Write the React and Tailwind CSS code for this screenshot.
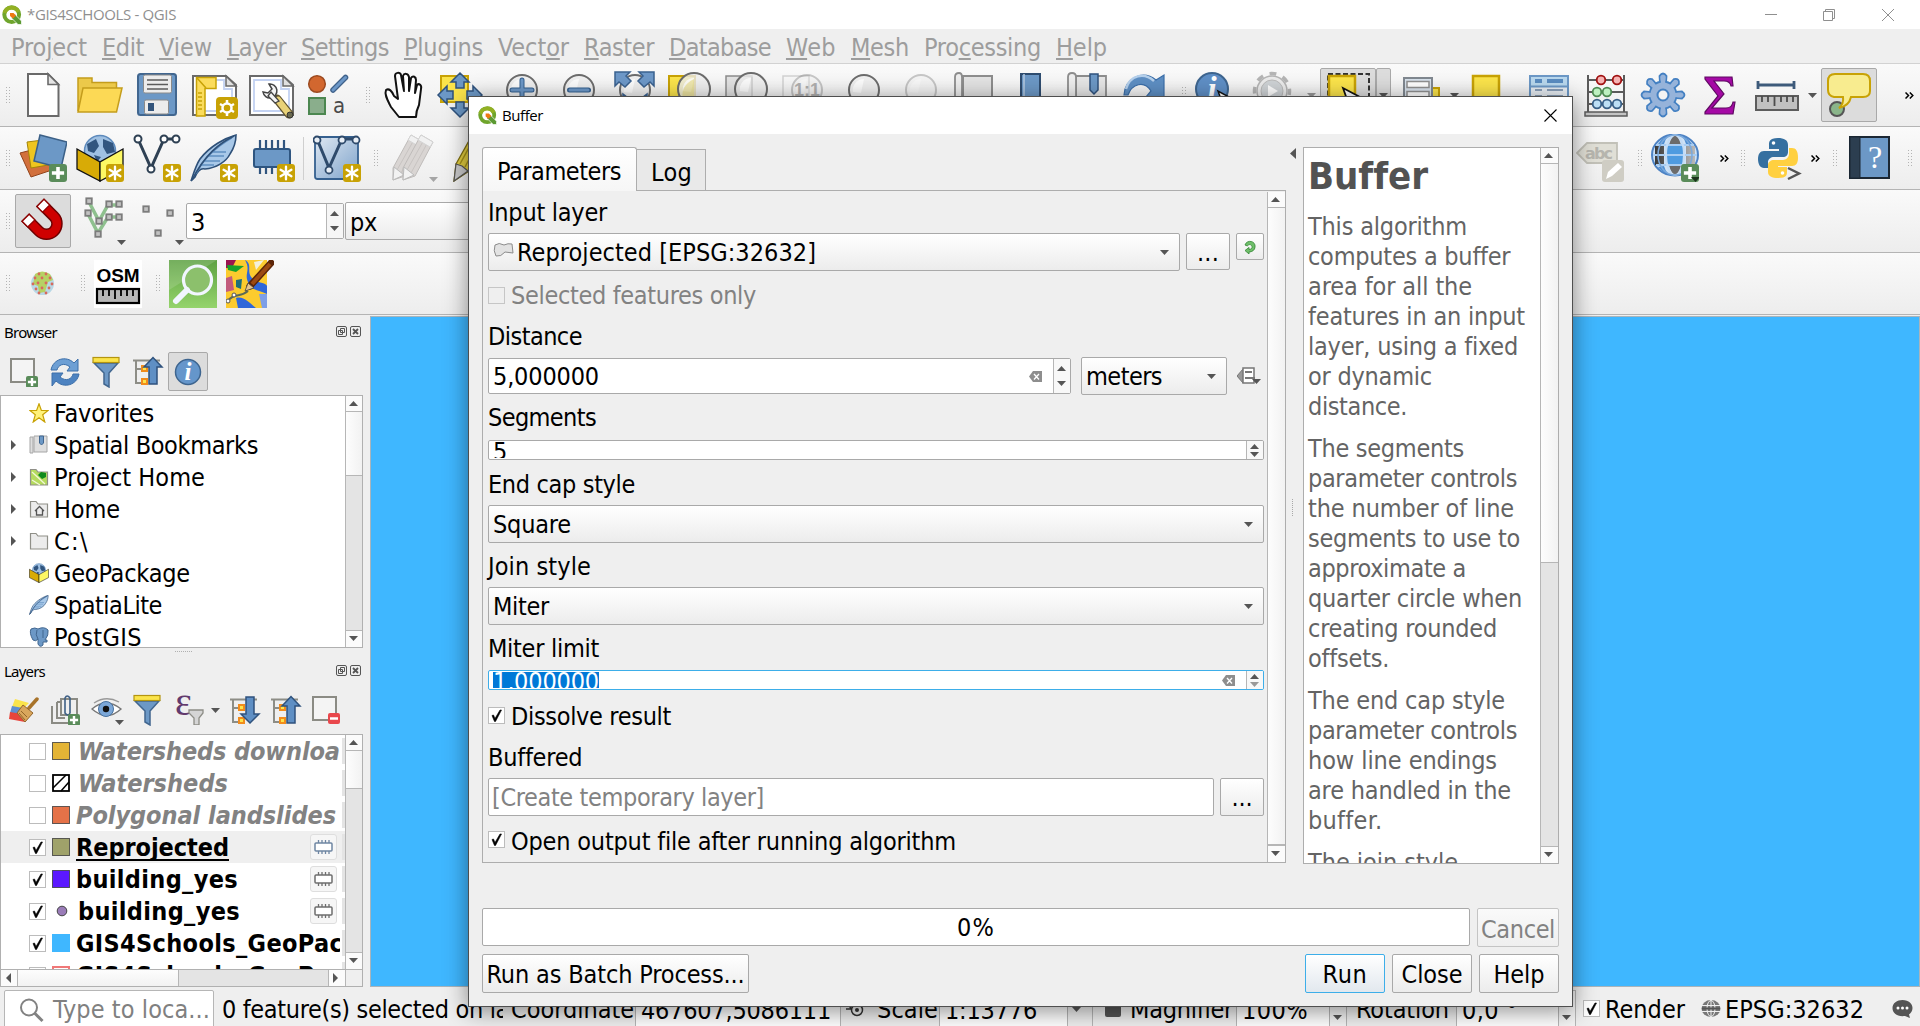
import React, { useLayoutEffect, useRef, useState } from "react";

/* ---------- text ---------- */

// A label whose letters are spaced so that the whole label has the width w.
function T({ w, className = "", children }) {
  const ref = useRef(null);
  const [ls, setLs] = useState(0);
  useLayoutEffect(() => {
    const el = ref.current;
    if (!w) return;
    const natural = el.getBoundingClientRect().width;
    setLs((w - natural) / el.textContent.length);
  }, [w]);
  return (
    <span ref={ref} className={"inline-block whitespace-pre " + className} style={{ letterSpacing: ls }}>
      {children}
    </span>
  );
}

/* ---------- small shared parts ---------- */

const Svg = ({ s = 48, w, h, vb, children, className = "" }) => (
  <svg width={w || s} height={h || s} viewBox={vb || `0 0 ${w || s} ${h || s}`} className={"block shrink-0 " + className} fill="none">
    {children}
  </svg>
);

const Down = ({ c = "#555", className = "" }) => (
  <Svg w={9} h={5} className={className}><path d="M0 0H9L4.5 5Z" fill={c} /></Svg>
);
const Up = ({ c = "#555", className = "" }) => (
  <Svg w={9} h={5} className={className}><path d="M0 5H9L4.5 0Z" fill={c} /></Svg>
);

function Grip({ className = "" }) {
  return (
    <Svg w={5} h={17} className={className}>
      {[0, 3, 6, 9, 12, 15].map((y) => (
        <g key={y} fill="#b4b4b4"><rect x="0" y={y} width="1" height="1" /><rect x="3" y={y} width="1" height="1" /></g>
      ))}
    </Svg>
  );
}
const GripCell = ({ w = "w-[18px]", pad = "pl-[10px]" }) => <div className={"flex shrink-0 items-center " + w + " " + pad}><Grip /></div>;
const Slot = ({ children }) => <div className="w-[57px] shrink-0 pl-[5px]">{children}</div>;

const Star = ({ x, y, s = 18 }) => {
  const c = s / 2;
  return (
    <g transform={`translate(${x} ${y})`}>
      <rect width={s} height={s} rx={s / 6} fill="#c8a205" />
      <path
        d={`M${c} ${s * 0.15}V${s * 0.85}M${s * 0.2} ${s * 0.32}L${s * 0.8} ${s * 0.68}M${s * 0.8} ${s * 0.32}L${s * 0.2} ${s * 0.68}`}
        stroke="#fff" strokeWidth={s * 0.13} strokeLinecap="round"
      />
    </g>
  );
};
const Plus = ({ x, y, s = 18 }) => (
  <g transform={`translate(${x} ${y})`}>
    <rect width={s} height={s} rx={s / 6} fill="#5a8c5a" />
    <path d={`M${s / 2} ${s * 0.16}V${s * 0.84}M${s * 0.16} ${s / 2}H${s * 0.84}`} stroke="#fff" strokeWidth={s * 0.2} />
  </g>
);

const QLogo = ({ s = 20 }) => (
  <Svg w={s} h={s} vb="0 0 20 20">
    <circle cx="9.7" cy="9.6" r="7.4" stroke="#6fa52c" strokeWidth="4" />
    <path d="M2.5 8A7.5 7.5 0 0 1 16.500 7" stroke="#93b023" strokeWidth="4" />
    <path d="M9.500 9.500L13 9.500L19.500 16V19.500H16L9.500 13Z" fill="#5c9a33" stroke="#fff" strokeWidth=".7" />
    <path d="M8 8H11.500L14 10.500L11 13.500L8 11Z" fill="#ee7913" />
  </Svg>
);

/* ---------- toolbar icons, 48px ---------- */

const Lens = ({ cx = 29, cy = 19, r = 15, faint }) => (
  <g opacity={faint ? 0.35 : 1}>
    <circle cx={cx} cy={cy} r={r} fill="#eeeeee" fillOpacity=".8" stroke="#6c6c6c" strokeWidth="2" />
    <path d={`M${cx - 11} ${cy + 2}A11 11 0 0 1 ${cx} ${cy - 11}L${cx - 3} ${cy + 3}Z`} fill="#fff" fillOpacity=".8" />
  </g>
);

const IcNew = () => (
  <Svg><path d="M9 3H29L39.500 13.500V45H9Z" fill="#fff" stroke="#6a6a6a" strokeWidth="2" /><path d="M29 3V13.500H39.500Z" fill="#e4e4e4" stroke="#6a6a6a" strokeWidth="1.6" /></Svg>
);
const IcOpen = () => (
  <Svg>
    <path d="M2 7H16V11.500H40.500V18H8L2 40Z" fill="#ecc94a" stroke="#c49d1c" strokeWidth="1.5" />
    <path d="M7 17H46L40.500 41H2Z" fill="#fcd955" stroke="#c49d1c" strokeWidth="1.5" />
  </Svg>
);
const IcSave = () => (
  <Svg>
    <rect x="5" y="3" width="38" height="41" rx="2.500" fill="#6c98c6" stroke="#41668f" strokeWidth="2" />
    <rect x="10.500" y="4" width="28" height="18" rx="1.500" fill="#ececec" stroke="#8a8a8a" />
    <path d="M14 9H35M14 13.500H35M14 18H35" stroke="#5b5b5b" strokeWidth="1.6" />
    <rect x="11.500" y="29" width="24" height="14" rx="1.500" fill="#ececec" stroke="#8a8a8a" />
    <rect x="15" y="32" width="6" height="8" fill="#33547b" />
  </Svg>
);
const Page = () => (
  <>
    <path d="M3 5H36L46 14V44H3Z" fill="#fff" stroke="#6a6a6a" strokeWidth="2" />
    <path d="M7 9H34V18H42V40H7Z" stroke="#c3d2f2" strokeWidth="1.800" />
    <path d="M36 5V15H46Z" fill="#e0e0e0" stroke="#6a6a6a" strokeWidth="1.500" />
  </>
);
const IcLayoutNew = () => (
  <Svg>
    <Page />
    <path d="M6.500 6.500H26V17.500H15V45H6.500Z" fill="#fbdc5c" stroke="#c8a205" strokeWidth="1.500" />
    <path d="M7 7L16 17M8 22H12M8 26H12M8 30H12M8 34H12M8 38H12" stroke="#c8a205" strokeWidth="1.500" />
    <rect x="26" y="26" width="22" height="22" rx="4" fill="#c8a205" />
    <circle cx="37" cy="37" r="4.500" stroke="#fff" strokeWidth="2.500" />
    <path d="M37 29V33M37 41V45M30 33L33.500 35M40.500 39L44 41M44 33L40.500 35M33.500 39L30 41" stroke="#fff" strokeWidth="2.500" />
  </Svg>
);
const IcLayoutMgr = () => (
  <Svg>
    <Page />
    <path d="M30 28L42 43" stroke="#5f5330" strokeWidth="9" strokeLinecap="round" />
    <path d="M31 29L42 43" stroke="#e9d278" strokeWidth="6.500" strokeLinecap="round" />
    <circle cx="43" cy="44" r="3" fill="#6a6a50" stroke="#333" />
    <path d="M22 13A7 7 0 1 1 16 21L21 22L25 18Z" fill="#f4f4f4" stroke="#444" strokeWidth="1.500" />
    <path d="M24 21L32 30L28 32L21 25Z" fill="#f4f4f4" stroke="#444" strokeWidth="1.300" />
  </Svg>
);
const IcStyle = () => (
  <Svg>
    <circle cx="13" cy="13" r="8.300" fill="#d2672f" stroke="#9c4a20" strokeWidth="1.500" />
    <path d="M29 19L41.500 6.500" stroke="#3f618a" strokeWidth="5.500" strokeLinecap="round" />
    <path d="M29 19L41.500 6.500" stroke="#6d98c8" strokeWidth="3" strokeLinecap="round" />
    <rect x="5" y="27" width="16" height="16" fill="#8aae8c" stroke="#4c8750" strokeWidth="2" />
    <text x="29" y="42" fontSize="22" fill="#4a4a4a" fontFamily="DejaVu Sans Condensed">a</text>
  </Svg>
);
const IcHand = () => (
  <Svg>
    <path
      d="M20 46L12 36C9 30 5 24 7 19C10 17 13 20 15 25L19 28L16 5C16 1 21 1 22 4L25 20L24 5C25 2 29 2 30 6L30 20L32 7C34 4 37 6 37 9L36 22L38 14C40 12 43 14 42 18L40 34C38 38 37 40 37 46Z"
      fill="#fff" stroke="#111" strokeWidth="2" strokeLinejoin="round"
    />
  </Svg>
);
const IcPan = () => (
  <Svg>
    <rect x="5" y="5" width="27" height="26" fill="#fbe44b" stroke="#c8a205" strokeWidth="2" />
    <path d="M24 2L33 11H28V17H20V11H15ZM24 46L33 37H28V31H20V37H15ZM2 24L11 15V20H17V28H11V33ZM46 24L37 15V20H31V28H37V33Z" fill="#6c98c6" stroke="#2f527d" strokeWidth="1.500" />
  </Svg>
);
const IcZoomIn = () => <Svg><Lens /><path d="M29 9V28M19 19H39" stroke="#35608f" strokeWidth="5" strokeLinecap="round" /><path d="M29 9V28M19 19H39" stroke="#6d98c8" strokeWidth="3" strokeLinecap="round" /></Svg>;
const IcZoomOut = () => <Svg><Lens /><path d="M19.500 19H38.500" stroke="#35608f" strokeWidth="5" strokeLinecap="round" /><path d="M20 19H38" stroke="#6d98c8" strokeWidth="3" strokeLinecap="round" /></Svg>;
const IcZoomFull = () => (
  <Svg>
    <Lens cx={28} />
    <path d="M8 1H23L19 5L24 10L18 16L12 11L8 15ZM47 1H32L36 5L31 10L37 16L43 11L47 15ZM36 26L40 23V28ZM20 26L16 23V28Z" fill="#6d98c8" stroke="#3a618f" strokeWidth="1.500" />
  </Svg>
);
const IcZoomSel = () => <Svg><rect x="5" y="5" width="26" height="26" fill="#fbe44b" stroke="#c8a205" strokeWidth="2" /><Lens cx={30} cy={18} r={16} /><path d="M30 8V28H19Q16 15 30 8" fill="#e8dc80" fillOpacity=".6" /></Svg>;
const IcZoomLayer = () => <Svg><rect x="5" y="5" width="26" height="26" fill="#e2e2e2" stroke="#8c8c8c" strokeWidth="1.500" /><Lens cx={30} cy={18} r={16} /><path d="M31 6V28" stroke="#ccc" /></Svg>;
const IcZoomNative = () => (
  <Svg>
    <rect x="5" y="5" width="26" height="26" stroke="#d2d2d2" strokeWidth="1.500" />
    <Lens faint />
    <text x="29" y="25" textAnchor="middle" fontSize="18" fontWeight="bold" fill="#b0b0b0" fontFamily="Liberation Sans">1:1</text>
  </Svg>
);
const IcLens = ({ faint }) => <Svg><Lens faint={faint} /></Svg>;
const IcMapNew = () => <Svg><path d="M14 5H43V40H14Z" fill="#e3e3e3" stroke="#8d8d8d" strokeWidth="2" /><path d="M6 40V6Q6 2 10 2Q13 2 13 6V40" fill="#eee" stroke="#8d8d8d" strokeWidth="1.800" /></Svg>;
const IcBook = () => <Svg><path d="M15 3H34V44H15Z" fill="#6c98c6" stroke="#2f4d70" strokeWidth="2" /><path d="M18 3V44" stroke="#b7cce3" strokeWidth="1.500" /></Svg>;
const IcBookmarks = () => (
  <Svg>
    <path d="M13 5H43V40H13Z" fill="#e6e6e6" stroke="#8d8d8d" strokeWidth="1.800" />
    <path d="M5 40V6Q5 2 9 2Q13 2 13 6V40" fill="#eee" stroke="#8d8d8d" strokeWidth="1.800" />
    <path d="M27 3H35V19L31 23L27 19Z" fill="#6c98c6" stroke="#2f527d" strokeWidth="1.500" />
  </Svg>
);
const IcRefresh = () => (
  <Svg>
    <path d="M4 24C5 8 22 -2 36 9L44 4V26H26L31 20C24 9 12 13 8 24Z" fill="#5e8fc4" stroke="#3c6fa9" strokeWidth="1.200" />
    <path d="M6 18C10 4 24 1 34 10" stroke="#b5d0ec" strokeWidth="2.500" />
  </Svg>
);
const IcInfo = () => (
  <Svg>
    <circle cx="17" cy="18" r="16" fill="#5f8fc6" stroke="#3e658f" strokeWidth="2" />
    <text x="17" y="29" textAnchor="middle" fontSize="33" fontStyle="italic" fontWeight="bold" fill="#fff" fontFamily="Liberation Serif">i</text>
    <path d="M23 20L28 34L33 29L36 27Z" fill="#fff" stroke="#111" strokeWidth="1.500" />
  </Svg>
);
const IcGearFaint = () => (
  <Svg>
    <circle cx="20" cy="20" r="17.500" stroke="#b5b5b5" strokeWidth="3.500" strokeDasharray="6.900 6.840" strokeDashoffset="3" />
    <circle cx="20" cy="20" r="15" fill="#ececec" stroke="#b5b5b5" strokeWidth="1.500" />
    <circle cx="20" cy="20" r="11" fill="#cfd3d6" stroke="#bbb" />
    <path d="M16 14L26 20L16 26Z" fill="#fff" />
  </Svg>
);
const IcSelect = () => (
  <Svg>
    <rect x="3" y="3" width="41" height="41" stroke="#333" strokeWidth="2" strokeDasharray="5 2.500" />
    <rect x="4" y="5" width="26" height="28" fill="#fbe44b" stroke="#c8a205" strokeWidth="2.500" />
    <path d="M18 17L24 34L28 28L35 26Z" fill="#fff" stroke="#111" strokeWidth="1.800" />
  </Svg>
);
const IcForm = () => (
  <Svg>
    <rect x="25" y="17" width="18" height="18" fill="#fbe44b" stroke="#c8a205" strokeWidth="2" />
    <rect x="8" y="7" width="28" height="35" fill="#d8e2ec" stroke="#808890" strokeWidth="2" />
    <path d="M11 10.500H33V16.500H11ZM11 20.500H33V27H11Z" fill="#fff" stroke="#909090" strokeWidth="1.500" />
  </Svg>
);
const IcYellow = () => <Svg><rect x="5" y="5" width="26" height="28" fill="#fbe44b" stroke="#c8a205" strokeWidth="2.500" /></Svg>;
const IcTable = () => (
  <Svg>
    <rect x="5" y="5" width="38" height="38" fill="#e8eef4" stroke="#6c98c6" strokeWidth="2" />
    <rect x="6" y="6" width="36" height="9" fill="#b9d8ee" />
    <path d="M5 15.500H43" stroke="#6c98c6" strokeWidth="2" />
    <path d="M10 10H17M22 10H38" stroke="#5a8cc0" strokeWidth="4" />
    <path d="M10 19H17M22 19H38M10 25H17M22 25H38" stroke="#8a9fb8" strokeWidth="2" />
  </Svg>
);
const IcAbacus = () => (
  <Svg>
    <path d="M6 4V41M42 4V41M6 9H42M6 21H42M6 33H42" stroke="#5b5b5b" strokeWidth="2" />
    <rect x="3" y="41" width="42" height="4" fill="#c4c4c4" stroke="#5b5b5b" strokeWidth="1.500" />
    {[[19, 9, "#f6b3b3", "#a01010"], [35, 9, "#f6b3b3", "#a01010"], [15, 21, "#bdf0c0", "#4e8a52"], [25, 21, "#bdf0c0", "#4e8a52"], [15, 33, "#bddff5", "#385f86"], [25, 33, "#bddff5", "#385f86"], [35, 33, "#bddff5", "#385f86"]].map((b, i) => (
      <circle key={i} cx={b[0]} cy={b[1]} r="4.300" fill={b[2]} stroke={b[3]} strokeWidth="1.800" />
    ))}
  </Svg>
);
const IcGear = () => (
  <Svg>
    {[0, 45, 90, 135, 180, 225, 270, 315].map((a) => (
      <path key={a} transform={`rotate(${a} 24 24)`} d="M21 12L20.500 5Q24 0 27.500 5L27 12Z" fill="#96b3da" stroke="#4480c2" strokeWidth="1.800" />
    ))}
    <circle cx="24" cy="24" r="13.500" fill="#96b3da" stroke="#4480c2" strokeWidth="1.800" />
    {[0, 45, 90, 135, 180, 225, 270, 315].map((a) => (
      <path key={a} transform={`rotate(${a} 24 24)`} d="M22 13L21.500 6Q24 2 26.500 6L26 13Z" fill="#96b3da" />
    ))}
    <circle cx="24" cy="24" r="5.500" fill="#f3f3f3" stroke="#4480c2" strokeWidth="2" />
  </Svg>
);
const IcSigma = () => (
  <Svg><path d="M9 6H36L37 15H35Q34 10 28 10H18L28 23L16 37H30Q36 37 37 31H39L37 43H9V41L22 25L9 8Z" fill="#a509a5" stroke="#5f0a62" strokeWidth="1.200" /></Svg>
);
const IcMeasure = () => (
  <Svg>
    <path d="M5 14H41M5 10V18M41 10V18" stroke="#3d5a7a" strokeWidth="2.800" />
    <rect x="3" y="25" width="42" height="14" fill="#c0c0c0" stroke="#5c5c5c" strokeWidth="2" />
    <path d="M9 25V31M15 25V31M21.500 25V35M28 25V31M34 25V31M40 25V31" stroke="#4c4c4c" strokeWidth="1.800" />
  </Svg>
);
const IcTips = () => (
  <Svg>
    <circle cx="12" cy="38" r="7" fill="#8ab58a" stroke="#555" strokeWidth="2" />
    <path d="M10 3H38Q45 3 45 10V20Q45 26 38 26H26Q24 35 14 37Q19 33 18 26H9Q3 25 3 19V10Q3 3 10 3Z" fill="#f8ec8f" stroke="#c8a205" strokeWidth="2" />
  </Svg>
);

const IcSource = () => (
  <Svg>
    <path d="M1 19L24 13L33 36L12 43Z" fill="#d2703c" stroke="#93441c" />
    <path d="M8 8L32 5L35 30L12 34Z" fill="#eec51f" stroke="#a28408" />
    <path d="M21 1L48 8L42 34L15 27Z" fill="#6c98c6" stroke="#3b6087" strokeWidth="1.500" />
    <Plus x={30} y={30} />
  </Svg>
);
const Box = () => (
  <>
    <circle cx="24" cy="17" r="15.500" fill="#9fc0e2" stroke="#5d8abc" strokeWidth="1.500" />
    <path d="M11 10L20 5L23 12L18 19L12 17ZM27 5L37 9L39 18L31 20L27 13ZM18 21L25 23L21 28Z" fill="#31557f" />
    <path d="M1 15L24 28V47L1 35Z" fill="#d8ab06" stroke="#111" strokeWidth="1.300" />
    <path d="M47 15L24 28V47L47 35Z" fill="#fdf864" stroke="#111" strokeWidth="1.300" />
  </>
);
const IcGpkg = () => <Svg><Box /><Star x={30} y={30} /></Svg>;
const VNodes = ({ c = "#2e4053" }) => (
  <>
    <path d="M5 5L18 34L31 5H44" stroke={c} strokeWidth="3" />
    {[[5, 5], [18, 35], [31, 5], [43, 5]].map((p, i) => <circle key={i} cx={p[0]} cy={p[1]} r="3.500" fill="#fff" stroke={c} strokeWidth="2" />)}
  </>
);
const IcShape = () => <Svg><VNodes /><Star x={30} y={30} /></Svg>;
const FeatherShape = () => (
  <>
    <path d="M46 1C35 4 20 12 10 25C6 31 4 38 1 47L5 43C8 36 12 34 15 35C26 34 36 28 40 20C44 14 46 8 46 1Z" fill="#a8c8e8" stroke="#2e5078" strokeWidth="1.600" />
    <path d="M42 4C28 12 14 24 6 40M22 18H36M18 22H34M14 27H30M10 31H24" stroke="#5f8ec0" strokeWidth="1.400" />
    <path d="M44 2C30 9 15 20 2 46" stroke="#2e5078" strokeWidth="1.600" />
  </>
);
const IcFeather = () => <Svg><FeatherShape /><Star x={30} y={30} /></Svg>;
const IcMemory = () => (
  <Svg>
    <path d="M13 6V14M19 6V14M25 6V14M31 6V14M37 6V14M13 33V40M19 33V40M25 33V40M31 33V40" stroke="#31557f" strokeWidth="2.200" />
    <rect x="7" y="15" width="36" height="18" rx="2" fill="#6c98c6" stroke="#2e5580" strokeWidth="2" />
    <Star x={30} y={30} />
  </Svg>
);
const IcVirtual = () => (
  <Svg>
    <defs><linearGradient id="vg" x1="0" y1="0" x2="1" y2="1"><stop offset="0" stopColor="#dfe8f2" /><stop offset="1" stopColor="#7ea3cb" /></linearGradient></defs>
    <rect x="2" y="3" width="43" height="42" rx="2.500" fill="url(#vg)" stroke="#35608f" strokeWidth="1.800" />
    <path d="M4 5L16 34L29 5H44" stroke="#2e4a6b" strokeWidth="3" />
    {[[4, 6], [16, 36], [29, 6], [43, 6]].map((p, i) => <circle key={i} cx={p[0]} cy={p[1]} r="3.500" fill="#e8eef5" stroke="#2e4a6b" strokeWidth="1.800" />)}
    <Star x={30} y={30} />
  </Svg>
);
const IcPencils = () => (
  <Svg>
    {[0, 10].map((d) => (
      <g key={d} transform={`translate(${d} 0)`}>
        <path d="M4 34L22 1L34 8L16 42L4 46Z" fill="#d9d5d3" stroke="#bfbcba" />
        <path d="M8 36L26 4M12 39L30 6" stroke="#c8c4c2" />
        <path d="M5 33L4 46L15 41L10 37Z" fill="#f2f2f2" stroke="#bbb" />
        <path d="M22 1L34 8L31 13L19 6Z" fill="#f1f1f1" stroke="#d4d4d4" />
      </g>
    ))}
  </Svg>
);
const IcPencil = () => (
  <Svg>
    <path d="M7 30L26 -4L36 2L20 37L5 47Z" fill="#e0cc3f" stroke="#7d6d10" strokeWidth="1.300" />
    <path d="M11 30L28 -1M16 33L33 1" stroke="#a59119" strokeWidth="1.500" />
    <path d="M7 30L5 47L19 37L13 32Z" fill="#c9c9c9" stroke="#555" strokeWidth="1.200" />
  </Svg>
);
const IcAbc = () => (
  <Svg>
    <path d="M1 19L11 9H41V29H11Z" fill="#e0dfd6" stroke="#c2c1b8" strokeWidth="1.800" />
    <text x="9" y="25" fontSize="16" fontWeight="bold" fill="#b6b5ae" textLength="28" fontFamily="DejaVu Sans">abc</text>
    <rect x="26" y="26" width="22" height="22" rx="3" fill="#cfcdc4" />
    <path d="M42 29L46 33L36 42L30 45L32 38Z" fill="#fff" />
  </Svg>
);
const IcWeb = () => (
  <Svg>
    <defs><linearGradient id="wg" x1="0" x2="1" y1="0" y2="0"><stop offset="0" stopColor="#3a3a3a" /><stop offset="1" stopColor="#b9b9b9" /></linearGradient></defs>
    <ellipse cx="24" cy="21" rx="23" ry="20.500" fill="#cfe2f6" stroke="#4e83c4" strokeWidth="2" />
    <path d="M16 12H32V31H16Z" fill="#4f9be0" /><path d="M4 12H13V31H4ZM35 12H44V31H35Z" fill="url(#wg)" />
    <path d="M18 11Q20 3 24 1.500Q28 3 30 11ZM18 31Q20 39 24 41Q28 39 30 31Z" fill="#6b6b6b" />
    <path d="M7 10Q11 4 17 2Q14 6 13 10ZM41 10Q37 4 31 2Q34 6 35 10ZM7 33Q11 38 17 40Q14 36 13 32Z" fill="#4f8fd2" />
    <path d="M2 21H46M5 11H43M5 31H43" stroke="#a9cdf2" strokeWidth="2" />
    <ellipse cx="24" cy="21" rx="9" ry="20" stroke="#c4dcf5" strokeWidth="2" /><ellipse cx="24" cy="21" rx="17" ry="20" stroke="#7ba9dc" strokeWidth="1.500" />
    <Plus x={30} y={30} /><path d="M40 43H49L44.500 48Z" fill="#1c331c" />
  </Svg>
);
const IcPython = () => (
  <Svg>
    <path d="M24 4C15 4 15 8 15 11V15H25V17H10C6 17 4 20 4 25C4 30 6 34 10 34H14V28C14 25 17 23 20 23H29C32 23 34 21 34 18V11C34 6 30 4 24 4Z" fill="#3670a0" />
    <path d="M24 44C33 44 33 41 33 37V33H24V32H38C42 32 44 29 44 24C44 17 42 14 38 14H35V20C35 23 32 26 29 26H20C17 26 14 28 14 31V38C14 42 18 44 24 44Z" fill="#ffd040" />
    <circle cx="19.500" cy="9" r="1.800" fill="#fff" /><circle cx="28.500" cy="39" r="1.800" fill="#fff" />
    <path d="M34 34L45 39.500L34 45" stroke="#555" strokeWidth="2.500" />
  </Svg>
);
const IcHelp = () => (
  <Svg>
    <rect x="4" y="3" width="39" height="41" fill="#6c98c6" stroke="#1b2733" strokeWidth="2" />
    <rect x="4" y="3" width="10" height="41" fill="#2c3e50" stroke="#1b2733" />
    <text x="29" y="34" textAnchor="middle" fontSize="32" fill="#fff" fontFamily="Liberation Serif">?</text>
  </Svg>
);
const IcMagnet = () => (
  <Svg>
    <g transform="translate(1 1) rotate(-45 24 24)">
      <path d="M9 8V27A15.500 15.500 0 0 0 40 27V8H30V27A5.500 5.500 0 0 1 19 27V8Z" fill="#cf0000" stroke="#6e0000" strokeWidth="1.500" />
      <path d="M9 8H19V16H9ZM30 8H40V16H30Z" fill="#fff" stroke="#8e0000" strokeWidth="1.300" />
    </g>
  </Svg>
);
const Node = ({ x, y }) => <rect x={x - 2.700} y={y - 2.700} width="5.500" height="5.500" fill="#c2c2c2" stroke="#7c7c7c" strokeWidth="1.800" />;
const IcSnapV = () => (
  <Svg>
    <path d="M9 5L19 24L28 8H39M8 17L18 36L28 20H39" stroke="#8ec08e" strokeWidth="3.500" />
    {[[9, 4], [29, 7], [39, 7], [8, 16], [19, 24], [29, 20], [39, 20], [18, 37]].map((p, i) => <Node key={i} x={p[0]} y={p[1]} />)}
    <path d="M37 43H46L41.500 48Z" fill="#555" />
  </Svg>
);
const IcSnapP = () => (
  <Svg><Node x={9} y={12} /><Node x={33} y={16} /><Node x={21} y={36} /><path d="M38 43H47L42.500 48Z" fill="#555" /></Svg>
);
const IcBall = () => (
  <Svg>
    <circle cx="24.500" cy="23.500" r="11.500" fill="#b8d8e6" />
    <path d="M17 14Q24 9 32 14L35 20L30 22L27 32L21 33L20 26L15 24Z" fill="#b6d264" />
    {[[21, 14], [28, 14], [17, 18], [24, 18], [32, 18], [15, 24], [20, 23], [28, 23], [34, 24], [18, 29], [24, 28], [31, 28], [21, 33], [28, 33]].map((p, i) => <circle key={i} cx={p[0]} cy={p[1]} r="1.400" fill="#d8695c" />)}
  </Svg>
);
const IcOsm = () => (
  <Svg className="bg-white">
    <text x="2.500" y="22" fontSize="19" fontWeight="bold" fill="#000" textLength="43" fontFamily="Liberation Sans">OSM</text>
    <rect x="3" y="29" width="42" height="14" fill="#b8b8b8" stroke="#000" strokeWidth="2.200" />
    <path d="M9 29V36M15 29V36M21 29V39M27 29V36M33 29V36M39 29V36" stroke="#000" strokeWidth="1.800" />
  </Svg>
);
const IcGreen = () => (
  <Svg>
    <defs><linearGradient id="gg" x1="0" y1="0" x2="0" y2="1"><stop offset="0" stopColor="#5da142" /><stop offset="1" stopColor="#95d46c" /></linearGradient></defs>
    <rect width="48" height="48" fill="url(#gg)" /><path d="M0 0H48L0 30Z" fill="#fff" fillOpacity=".15" />
    <circle cx="28.500" cy="20" r="14" fill="#8cc06c" stroke="#f2f6ff" strokeWidth="3.200" />
    <path d="M18 30L7 41" stroke="#f2f6ff" strokeWidth="6" strokeLinecap="round" />
  </Svg>
);
const IcJosm = () => (
  <Svg>
    <rect width="41" height="48" fill="#fccb2e" />
    <path d="M19 0C27 4 20 12 26 18C32 24 40 22 41 26V34C32 30 24 30 22 22C18 14 25 10 19 0ZM10 38C18 36 22 42 30 48H12Z" fill="#2f67d9" />
    <path d="M0 0H10L6 8H0Z" fill="#9a1550" /><path d="M1 5L18 6L10 12L2 10Z" fill="#17a32a" />
    <path d="M0 18L6 16L8 30L0 32Z" fill="#c25b7c" /><path d="M10 20L16 19L15 29L10 27Z" fill="#1d6f7a" />
    <path d="M33 34H41V48H36Z" fill="#7d9fe8" /><path d="M28 2L38 0L30 10Z" fill="#f3f0da" />
    <path d="M1 42C8 32 14 38 22 31" stroke="#5b6a55" strokeWidth="2" /><circle cx="2" cy="41" r="2" fill="#fff" stroke="#555" /><circle cx="8" cy="35" r="2" fill="#fff" stroke="#555" />
    <path d="M45 3L24 26" stroke="#5c2508" strokeWidth="7" strokeLinecap="round" /><path d="M44 4L26 24" stroke="#9c4a12" strokeWidth="4" />
    <path d="M22 23L28 28L19 31Z" fill="#e8c68e" stroke="#444" strokeWidth=".8" />
  </Svg>
);

const Chev = () => (
  <Svg w={9} h={7}><path d="M.5 .5L3.500 3.500L.5 6.500M4.800 .5L7.800 3.500L4.800 6.500" stroke="#000" strokeWidth="1.500" /></Svg>
);

/* ---------- dock icons ---------- */

const DAdd = () => <Svg s={30}><rect x="2" y="2" width="23" height="23" fill="#f4f4f4" stroke="#8b8b84" strokeWidth="2" /><Plus x={17} y={19} s={12} /></Svg>;
const DRefresh = () => (
  <Svg s={30}>
    <path d="M1 13C3 2 16 -2 24 6L28 2V14H17L20 10C14 5 8 8 7 13Z" fill="#6d9fd4" stroke="#3c6fa9" />
    <path d="M29 17C27 28 14 32 6 24L2 29V16H13L10 20C16 25 22 22 23 17Z" fill="#4d83c1" stroke="#3c6fa9" />
  </Svg>
);
const DFilter = () => (
  <Svg w={28} h={32}><path d="M2 7H26L17 17V31L12 28V17Z" fill="#6c98c6" stroke="#41668f" strokeWidth="1.500" /><rect x="1" y="1.500" width="26" height="5" fill="#fbe44b" stroke="#b49510" strokeWidth="1.200" /></Svg>
);
const DTree = ({ down }) => (
  <Svg s={31}>
    <path d="M0 4.500H27M3 5V27H9M3 13H9" stroke="#8d8d86" strokeWidth="2" />
    <rect x="9" y="10" width="5" height="5" fill="#fbe44b" stroke="#f28c1c" strokeWidth="2" /><rect x="9" y="23" width="5" height="5" fill="#fbe44b" stroke="#f28c1c" strokeWidth="2" />
    {down
      ? <path d="M16 2H24V19H29L20 28L11 19H16Z" fill="#5f8fc4" stroke="#2f527d" strokeWidth="1.500" />
      : <path d="M16 28H24V11H29L20 1.500L11 11H16Z" fill="#5f8fc4" stroke="#2f527d" strokeWidth="1.500" />}
  </Svg>
);
const DInfo = () => (
  <Svg s={28}>
    <circle cx="14" cy="14" r="12.500" fill="#6596cb" stroke="#3e658f" strokeWidth="1.500" />
    <text x="14" y="22" textAnchor="middle" fontSize="25" fontStyle="italic" fontWeight="bold" fill="#fff" fontFamily="Liberation Serif">i</text>
  </Svg>
);
const DBrush = () => (
  <Svg s={30}>
    <path d="M6 4L20 8L14 14L3 12Z" fill="#fbe44b" /><path d="M3 11L14 13L12 20L1 18Z" fill="#5f8fd0" /><path d="M1 17L13 19L16 27L0 24Z" fill="#e8453c" />
    <path d="M28 4L20 13" stroke="#a8732a" strokeWidth="3.500" strokeLinecap="round" />
    <path d="M14 10L24 18L16 27L8 18Z" fill="#d9a65c" stroke="#94652a" /><path d="M12 16L18 22M10 18L16 25" stroke="#94652a" />
  </Svg>
);
const DGroup = () => (
  <Svg s={30}><path d="M1 11V28H18M6 7V23H14M6 7H9M10 4H26V20H10Z" stroke="#8b8b84" strokeWidth="2" /><path d="M14 10V18Q17 22 19 18V3Q16 -1 14 3V10" stroke="#3e5f85" strokeWidth="1.600" /><Plus x={17} y={19} s={12} /></Svg>
);
const DEye = () => (
  <Svg w={33} h={30}>
    <path d="M1 14Q15 2 30 14Q16 27 1 14Z" fill="#fff" stroke="#777" strokeWidth="1.400" /><path d="M3 8Q15 0 28 7" stroke="#999" strokeWidth="1.400" />
    <circle cx="15" cy="14" r="7.500" fill="#7ba7d8" stroke="#47719f" /><circle cx="15" cy="14" r="3.200" fill="#111" /><path d="M24 25H33L28.500 30Z" fill="#555" />
  </Svg>
);
const DEps = () => (
  <Svg s={30}>
    <text x="0" y="20" fontSize="40" fill="#623a6d" fontFamily="Liberation Serif">ε</text>
    <path d="M14 15H28V18L24 23V30H19V23L14 18Z" fill="#d5d5d5" stroke="#8d8d86" strokeWidth="1.300" />
  </Svg>
);
const DRemove = () => <Svg s={30}><rect x="2" y="2" width="23" height="23" fill="#f4f4f4" stroke="#8b8b84" strokeWidth="2" /><rect x="17" y="18" width="12" height="11" rx="2" fill="#e9474c" /><path d="M19 23.500H27" stroke="#fff" strokeWidth="2.500" /></Svg>;

const Folder = ({ fill = "#ececec", children }) => <Svg s={20}><path d="M1.500 2.500H7L9 5H18.500V18H1.500Z" fill={fill} stroke="#8f8f88" strokeWidth="1.200" />{children}</Svg>;
const browserRows = [
  { t: "Favorites", w: 100, i: <Svg s={20}><path d="M10 .8L12.400 7.500H19L13.700 11.700L15.800 19L10 14.700L4.200 19L6.300 11.700L1 7.500H7.600Z" fill="#fff27a" stroke="#c8a205" strokeWidth="1.200" /></Svg> },
  { t: "Spatial Bookmarks", w: 204, a: 1, i: <Svg s={20}><path d="M1 2H4V18H1ZM5 1H18V17H5Z" fill="#dedede" stroke="#a6a6a6" /><path d="M10.500 1H14.500V8L12.500 10L10.500 8Z" fill="#6c98c6" stroke="#41668f" /></Svg> },
  { t: "Project Home", w: 151, a: 1, i: <Folder fill="#b5db5e"><path d="M3 5L16 17M3 13L11 18" stroke="#f3f7d9" strokeWidth="1.300" /><path d="M9 8L12 5L17 6V10L13 12Z" fill="#0f8a1c" /></Folder> },
  { t: "Home", w: 66, a: 1, i: <Folder><path d="M6 12L10.500 7.500L15 12M7.500 11V16H13.500V11" stroke="#555" strokeWidth="1.300" /></Folder> },
  { t: "C:\\", w: 35, a: 1, i: <Folder /> },
  { t: "GeoPackage", w: 136, i: <Svg s={20} vb="0 0 48 48"><Box /></Svg> },
  { t: "SpatiaLite", w: 108, i: <Svg s={20} vb="0 0 48 48"><FeatherShape /></Svg> },
  { t: "PostGIS", w: 88, i: <Svg s={20}><path d="M2 2Q6 0 9 2Q15 -1 19 3Q20 8 16 13H18V15H14V18Q11 21 9 17V12Q7 15 4 13Q0 6 2 2Z" fill="#6c98c6" stroke="#41668f" /><path d="M8 3Q6 8 9 12M14 3V11" stroke="#41668f" /></Svg> },
];

const Swatch = ({ c }) => <Svg s={18}><rect x=".5" y=".5" width="17" height="17" fill={c} stroke="#3b3b3b" strokeOpacity=".8" /></Svg>;
const Chip = ({ c }) => (
  <div className="absolute right-[8px] top-[3px] flex h-[26px] w-[27px] items-center justify-center rounded-[3px] border border-[#dedede] bg-[#f6f6f6]">
    <Svg w={19} h={16}><path d="M4.500 1V4M8 1V4M11.500 1V4M15 1V4M4.500 12V15M8 12V15M11.500 12V15M15 12V15" stroke={c} strokeWidth="1.300" /><rect x="1" y="4" width="17" height="8" rx="1" stroke={c} strokeWidth="1.500" fill="#fff" /></Svg>
  </div>
);
const layerRows = [
  { t: "Watersheds downloaded", w: 309, c: "#e3b436", off: 1, dx: "pl-[2px]" },
  { t: "Watersheds", w: 150, hatch: 1, off: 1, dx: "pl-[2px]" },
  { t: "Polygonal landslides", w: 260, c: "#e57248", off: 1 },
  { t: "Reprojected", w: 153, c: "#9fa26a", chip: "#6f86a3", sel: 1 },
  { t: "building_yes", w: 162, c: "#5b17ff", chip: "#6e6e6e" },
  { t: "building_yes", w: 162, dot: 1, chip: "#6e6e6e", dx: "pl-[2px]" },
  { t: "GIS4Schools_GeoPackage", w: 330, c: "#3fb7ff", flat: 1 },
  { t: "GIS4Schools_GeoPackage", w: 330, c: "#fff", red: 1, off: 1 },
];

function Check({ on, dim, className = "" }) {
  return (
    <span className={"flex h-[17px] w-[17px] shrink-0 items-center justify-center border " + (dim ? "border-[#c6c6c6] bg-[#efefef] " : "border-[#bcbcbc] bg-white ") + className}>
      {on && <Svg w={13} h={13}><path d="M2 6.500L3.500 6L5 9.500L10 1H11.500L5.500 12.500H4.500Z" fill="#000" stroke="#000" strokeWidth=".6" /></Svg>}
    </span>
  );
}

/* ---------- scroll bars ---------- */

function VScroll({ thumb, className = "" }) {
  return (
    <div className={"flex shrink-0 flex-col border-l border-[#b6b6b6] bg-[#e4e4e4] " + className}>
      <div className="flex h-[16px] items-center justify-center border-b border-[#b6b6b6] bg-[#fbfbfb] pr-[2px]"><Up /></div>
      <div className={"border-b border-[#b6b6b6] bg-gradient-to-r from-[#fdfdfd] to-[#f2f2f2] " + thumb} />
      <div className="mt-auto flex h-[17px] items-center justify-center border-t border-[#b6b6b6] bg-[#fbfbfb] pr-[2px] pb-px"><Down /></div>
    </div>
  );
}

function DockTitle({ children, w }) {
  return (
    <div className="flex h-[36px] shrink-0 items-center pl-[4px] pr-[9px] font-['Noto_Sans'] text-[15px] text-black">
      <T w={w} className="pb-[2px]">{children}</T>
      <div className="ml-auto flex gap-[3px] pb-[3px]">
        <Svg s={11}><rect x=".5" y=".5" width="10" height="10" rx="1.500" stroke="#555" /><path d="M4.500 2.500H8.500V6.500H4.500ZM2.500 4.500H6.500V8.500H2.500Z" stroke="#555" /></Svg>
        <Svg s={11}><rect x=".5" y=".5" width="10" height="10" rx="1.500" stroke="#555" /><path d="M3 3L8 8M8 3L3 8" stroke="#555" strokeWidth="1.800" /></Svg>
      </div>
    </div>
  );
}

/* ---------- main window ---------- */

const menus = [
  ["Pro", "j", "ect", 76], ["", "E", "dit", 42], ["", "V", "iew", 53], ["", "L", "ayer", 59], ["", "S", "ettings", 88], ["", "P", "lugins", 79],
  ["Vect", "o", "r", 71], ["", "R", "aster", 70], ["", "D", "atabase", 102], ["", "W", "eb", 50], ["", "M", "esh", 58], ["Pro", "c", "essing", 117], ["", "H", "elp", 51],
];

const bar = "flex shrink-0 items-center border-b border-[#b4b4b4] bg-gradient-to-b from-[#fafafa] to-[#ededed] ";
const pressed = "flex h-[54px] shrink-0 items-center rounded-[2px] border border-[#a9a9a9] bg-[#dcdcdc] ";

function Toolbars() {
  return (
    <>
      <div className={bar + "h-[63px]"}>
        <GripCell w="w-[14px]" pad="pl-[6px]" />
        <Slot><IcNew /></Slot><Slot><IcOpen /></Slot><Slot><IcSave /></Slot><Slot><IcLayoutNew /></Slot><Slot><IcLayoutMgr /></Slot><Slot><IcStyle /></Slot>
        <GripCell />
        <Slot><IcHand /></Slot><Slot><IcPan /></Slot><Slot><IcZoomIn /></Slot><Slot><IcZoomOut /></Slot><Slot><IcZoomFull /></Slot><Slot><IcZoomSel /></Slot>
        <Slot><IcZoomLayer /></Slot><Slot><IcZoomNative /></Slot><Slot><IcLens /></Slot><Slot><IcLens faint /></Slot><Slot><IcMapNew /></Slot><Slot><IcBook /></Slot>
        <Slot><IcBookmarks /></Slot><Slot><IcRefresh /></Slot>
        <GripCell />
        <Slot><IcInfo /></Slot><Slot><IcGearFaint /></Slot>
        <div className="w-[16px] shrink-0 pl-[3px]"><Down c="#999" /></div>
        <div className={pressed + "w-[56px] pl-[4px]"}><IcSelect /></div>
        <div className={pressed + "w-[15px] justify-center"}><Down /></div>
        <Slot><IcForm /></Slot>
        <div className="w-[15px] shrink-0 pl-[2px]"><Down /></div>
        <Slot><IcYellow /></Slot><Slot><IcTable /></Slot><Slot><IcAbacus /></Slot><Slot><IcGear /></Slot><Slot><IcSigma /></Slot><Slot><IcMeasure /></Slot>
        <div className="w-[16px] shrink-0 pl-[3px]"><Down /></div>
        <div className={pressed + "w-[56px] pl-[3px]"}><IcTips /></div>
        <div className="ml-[28px]"><Chev /></div>
      </div>
      <div className={bar + "h-[63px]"}>
        <GripCell w="w-[14px]" pad="pl-[6px]" />
        <Slot><IcSource /></Slot><Slot><IcGpkg /></Slot><Slot><IcShape /></Slot><Slot><IcFeather /></Slot><Slot><IcMemory /></Slot>
        <div className="h-[43px] w-[9px] shrink-0 pl-[4px]"><div className="h-full w-px bg-[#cfcfcf]" /></div>
        <Slot><IcVirtual /></Slot>
        <GripCell w="w-[24px]" pad="pl-[9px]" />
        <IcPencils />
        <div className="w-[12px] shrink-0 pt-[43px]"><Down c="#a5a5a5" className="-ml-[8px]" /></div>
        <IcPencil />
        <div className="ml-[1079px]"><IcAbc /></div>
        <GripCell w="w-[27px]" pad="pl-[14px]" />
        <IcWeb />
        <div className="ml-[21px] w-[9px]"><Chev /></div>
        <GripCell w="w-[25px]" pad="pl-[12px]" />
        <IcPython />
        <div className="ml-[9px] w-[9px]"><Chev /></div>
        <GripCell w="w-[26px]" pad="pl-[13px]" />
        <IcHelp />
        <GripCell w="w-[24px]" pad="pl-[14px]" />
      </div>
      <div className={bar + "h-[63px]"}>
        <GripCell w="w-[15px]" pad="pl-[6px]" />
        <div className={pressed + "w-[56px] pl-[3px]"}><IcMagnet /></div>
        <div className="pl-[9px]"><IcSnapV /></div>
        <div className="pl-[9px]"><IcSnapP /></div>
        <div className="ml-px flex h-[36px] w-[158px] shrink-0 rounded-[2px] border border-[#a9a9a9] bg-white">
          <div className="flex-1 pl-[4px] text-[25px] leading-[37px]">3</div>
          <div className="flex w-[17px] flex-col items-center gap-[10px] border-l border-[#b6b6b6] bg-[#f6f6f6] pr-px pt-[7px]"><Up /><Down /></div>
        </div>
        <div className="ml-px h-[38px] w-[200px] rounded-[2px] border border-[#a9a9a9] bg-gradient-to-b from-white to-[#ececec] pl-[4px] text-[25px] leading-[39px]"><T w={27}>px</T></div>
      </div>
      <div className={bar + "h-[62px]"}>
        <GripCell w="w-[18px]" pad="pl-[6px]" />
        <IcBall />
        <GripCell w="w-[28px]" pad="pl-[15px]" />
        <IcOsm />
        <GripCell w="w-[27px]" pad="pl-[14px]" />
        <IcGreen />
        <div className="pl-[9px]"><IcJosm /></div>
      </div>
    </>
  );
}

function BrowserDock() {
  return (
    <>
      <DockTitle w={53}>Browser</DockTitle>
      <div className="mb-[3px] flex h-[41px] shrink-0 items-center pl-[9px]">
        <DAdd />
        <div className="ml-[11px]"><DRefresh /></div>
        <div className="ml-[12px]"><DFilter /></div>
        <div className="ml-[13px]"><DTree /></div>
        <div className="ml-[4px] flex h-[39px] w-[40px] items-center justify-center rounded-[2px] border border-[#a9a9a9] bg-[#dcdcdc]"><DInfo /></div>
      </div>
      <div className="flex h-[253px] w-[363px] shrink-0 overflow-hidden border border-[#b0b0b0] bg-white">
        <div className="flex-1 overflow-hidden pt-px">
          {browserRows.map((r) => (
            <div key={r.t} className="flex h-[32px] items-center text-[25px] leading-[32px]">
              <div className="w-[28px] shrink-0 pl-[10px]">{r.a && <Svg w={5} h={10}><path d="M0 0L5 5L0 10Z" fill="#555" /></Svg>}</div>
              {r.i}
              <T w={r.w} className="ml-[5px] pt-px">{r.t}</T>
            </div>
          ))}
        </div>
        <VScroll className="w-[17px]" thumb="h-[64px]" />
      </div>
    </>
  );
}

function LayersDock() {
  return (
    <>
      <div className="flex h-[6px] shrink-0 items-center pl-[175px]">
        <div className="w-[17px] border-t border-dotted border-[#b0b0b0]" />
      </div>
      <DockTitle w={41}>Layers</DockTitle>
      <div className="mb-[4px] flex h-[40px] shrink-0 items-center pl-[9px]">
        <DBrush />
        <div className="ml-[12px]"><DGroup /></div>
        <div className="ml-[10px]"><DEye /></div>
        <div className="ml-[9px]"><DFilter /></div>
        <div className="ml-[14px]"><DEps /></div>
        <div className="ml-[6px]"><Down /></div>
        <div className="ml-[10px]"><DTree down /></div>
        <div className="ml-[10px]"><DTree /></div>
        <div className="ml-[9px]"><DRemove /></div>
      </div>
      <div className="flex h-[253px] w-[363px] shrink-0 flex-col border border-[#b0b0b0] bg-white">
        <div className="flex h-[234px] overflow-hidden">
          <div className="flex-1 overflow-hidden">
            {layerRows.map((r, i) => (
              <div key={i} className={"relative flex h-[32px] w-[344px] items-center overflow-hidden pl-[28px] text-[25px] leading-[33px] " + (r.sel ? "bg-[#efefef]" : "bg-white")}>
                <Check on={!r.off} />
                <div className="ml-[6px] w-[18px] shrink-0">
                  {r.hatch ? <Svg s={18}><rect x="1" y="1" width="16" height="16" fill="#fff" stroke="#000" strokeWidth="1.800" /><path d="M1 14L14 1M9 17L17 8" stroke="#000" strokeWidth="1.500" /></Svg>
                    : r.dot ? <Svg s={18}><circle cx="10" cy="9" r="4.800" fill="#9a7cb8" stroke="#444" /></Svg>
                    : r.flat ? <div className="h-[18px] w-[18px] bg-[#3fb7ff]" />
                    : r.red ? <div className="h-[18px] w-[18px] border-2 border-[#f07878] bg-white" />
                    : <Swatch c={r.c} />}
                </div>
                <div className={"ml-[6px] w-[264px] shrink-0 overflow-hidden pt-px " + (r.dx || "")}>
                  <T w={r.w} className={"font-bold " + (i < 3 ? "italic text-[#828282]" : "text-black") + (r.sel ? " border-b-2 border-black leading-[22px]" : "")}>{r.t}</T>
                </div>
                {r.chip && <Chip c={r.chip} />}
                <div className="absolute right-0 top-[3px] h-[26px] w-[3px] bg-[#e4e4e4]" />
              </div>
            ))}
          </div>
          <VScroll className="w-[17px]" thumb="h-[38px]" />
        </div>
        <div className="flex h-[17px] border-t border-[#b0b0b0] bg-[#e4e4e4]">
          <div className="flex w-[17px] items-center justify-center border-r border-[#b6b6b6] bg-[#fbfbfb] pr-px"><Svg w={5} h={10}><path d="M5 0L0 5L5 10Z" fill="#555" /></Svg></div>
          <div className="w-[161px] border-r border-[#b6b6b6] bg-gradient-to-b from-[#fdfdfd] to-[#f2f2f2]" />
          <div className="ml-auto flex w-[18px] items-center justify-center border-x border-[#b6b6b6] bg-[#fbfbfb] pr-[3px]"><Svg w={5} h={10}><path d="M0 0L5 5L0 10Z" fill="#555" /></Svg></div>
          <div className="w-[16px] bg-[#efefef]" />
        </div>
      </div>
    </>
  );
}

function StatusBar() {
  const box = "mt-[3px] h-[40px] shrink-0 border border-[#b6b6b6] bg-white text-[25px] leading-[40px] ";
  return (
    <div className="flex h-[39px] shrink-0 overflow-hidden text-[25px] leading-[46px]">
      <div className={box + "ml-[4px] flex w-[210px] items-center rounded-[2px] pl-[14px]"}>
        <Svg s={25}><circle cx="10" cy="9.500" r="8" stroke="#828282" strokeWidth="2" /><path d="M15.500 15L23.500 23" stroke="#828282" strokeWidth="3" /></Svg>
        <T w={157} className="ml-[9px] text-[#808080]">Type to loca...</T>
      </div>
      <div className="ml-[8px] w-[281px] shrink-0 overflow-hidden"><T w={300}>0 feature(s) selected on lay</T></div>
      <T w={123} className="ml-[8px]">Coordinate</T>
      <div className={box + "ml-[1px] w-[206px] pl-[5px]"}><T w={190}>467607,5086111</T></div>
      <Svg w={20} h={34} className="ml-[4px]"><circle cx="12" cy="23" r="5.500" stroke="#333" strokeWidth="1.500" /><circle cx="12" cy="23" r="2" fill="#333" /><path d="M1 22L6 22L4 18L10 18L16 13" stroke="#333" strokeWidth="1.500" /></Svg>
      <T w={61} className="ml-[12px]">Scale</T>
      <div className={box + "ml-[1px] w-[129px] pl-[5px]"}><T w={92}>1:13776</T></div>
      <div className="w-[24px] shrink-0 pl-[4px] pt-[20px]"><Down /></div>
      <div className="mt-[3px] w-px bg-[#b6b6b6]" />
      <Svg w={16} h={34} className="ml-[12px]"><rect x="0" y="18" width="16" height="12" rx="2" fill="#555" /><path d="M3 18V13H13V18" stroke="#555" strokeWidth="2" /></Svg>
      <T w={103} className="ml-[9px]">Magnifier</T>
      <div className={box + "ml-[3px] flex w-[111px] pl-[5px]"}><T w={66}>100%</T><div className="ml-auto w-[17px] border-l border-[#b6b6b6] bg-[#f4f4f4] pl-[3px] pt-[24px]"><Down /></div></div>
      <T w={93} className="ml-[9px]">Rotation</T>
      <div className={box + "ml-[7px] flex w-[120px] pl-[5px]"}><T w={56}>0,0 °</T><div className="ml-auto w-[17px] border-l border-[#b6b6b6] bg-[#f4f4f4] pl-[3px] pt-[24px]"><Down /></div></div>
      <Check on className="ml-[7px] mt-[13px]" />
      <T w={80} className="ml-[5px]">Render</T>
      <Svg w={20} h={34} className="ml-[16px]">
        <ellipse cx="10" cy="21.500" rx="9.500" ry="8.500" fill="#777" /><ellipse cx="10" cy="21.500" rx="4" ry="8" stroke="#efefef" /><path d="M0 18.500H20M0 24.500H20M10 13V30" stroke="#efefef" /><path d="M1 21.500H19" stroke="#555" strokeWidth="2" />
      </Svg>
      <T w={139} className="ml-[4px]">EPSG:32632</T>
      <Svg w={21} h={34} className="ml-[28px]"><path d="M10.500 13C17 13 20.500 17 20.500 21C20.500 24 19 26 17 27.500L18 31L13 29C5 30 0.500 26 0.500 21C0.500 16 5 13 10.500 13Z" fill="#555" /><circle cx="6" cy="21" r="1.500" fill="#fff" /><circle cx="10.500" cy="21" r="1.500" fill="#fff" /><circle cx="15" cy="21" r="1.500" fill="#fff" /></Svg>
    </div>
  );
}

/* ---------- dialog ---------- */

const frame = "rounded-[2px] border border-[#a9a9a9] ";
const grad = "bg-gradient-to-b from-white to-[#ececec] ";

const Combo = ({ w, className, icon, children }) => (
  <div className={frame + grad + "flex h-[38px] items-center pl-[4px] pr-[10px] leading-[36px] " + className}>
    {icon}<T w={w} className="pt-[2px]">{children}</T><Down className="ml-auto" />
  </div>
);
const Clear = () => <Svg w={13} h={11}><path d="M4 0H13V11H4L0 5.500Z" fill="#8e8e8e" /><path d="M5 3L10 8.500M10 3L5 8.500" stroke="#fff" strokeWidth="1.300" /></Svg>;
const Button = ({ w, className = "", children }) => (
  <div className={frame + grad + "flex shrink-0 items-center justify-center leading-[36px] " + className}><T w={w} className="pt-[2px]">{children}</T></div>
);

const helpText = [
  [["This algorithm", 159], ["computes a buffer", 202], ["area for all the", 164], ["features in an input", 217], ["layer, using a fixed", 210], ["or dynamic", 124], ["distance.", 99]],
  [["The segments", 156], ["parameter controls", 209], ["the number of line", 206], ["segments to use to", 212], ["approximate a", 158], ["quarter circle when", 214], ["creating rounded", 189], ["offsets.", 81]],
  [["The end cap style", 197], ["parameter controls", 209], ["how line endings", 189], ["are handled in the", 203], ["buffer.", 74]],
  [["The join style", 150]],
];

function Parameters() {
  return (
    <div className="flex h-[672px] w-[804px] border border-t-0 border-[#adadad]">
      <div className="w-[782px] shrink-0 pl-[5px] pt-px">
        <div className="h-[41px] leading-[41px]"><T w={119}>Input layer</T></div>
        <div className="flex">
          <Combo w={299} className="w-[692px]" icon={<Svg w={21} h={16} className="mr-[3px] -mt-[4px]"><path d="M2 3Q6 0 11 3Q15 1 19 2L20 11L12 10Q8 15 3 14Q0 9 2 3Z" fill="#e2e2e2" stroke="#8c8c8c" /></Svg>}>Reprojected [EPSG:32632]</Combo>
          <Button w={22} className="ml-[6px] h-[37px] w-[44px]">...</Button>
          <div className={frame + grad + "ml-[6px] flex h-[27px] w-[28px] items-center justify-center"}>
            <Svg s={14}><path d="M2 5C4 -1 13 1 12 7C12 10 9 12 6 12V14L2 10.500L6 7.500V9.500C8 9.500 9.500 8 9 6.500C8.500 4 5 4 4.500 6Z" fill="#6fbf6a" stroke="#3c8c3c" strokeWidth=".9" /></Svg>
          </div>
        </div>
        <div className="flex h-[50px] items-center pb-px leading-[50px] text-[#828282]"><Check dim /><T w={245} className="ml-[6px] pt-px">Selected features only</T></div>
        <div className="h-[36px] leading-[32px]"><T w={94}>Distance</T></div>
        <div className="flex items-center">
          <div className={frame + "flex h-[36px] w-[583px] items-center bg-white pl-[4px] leading-[34px]"}>
            <T w={106} className="pt-[2px]">5,000000</T>
            <div className="ml-auto mr-[11px]"><Clear /></div>
            <div className="flex h-full w-[17px] flex-col items-center gap-[10px] border-l border-[#b6b6b6] bg-[#f8f8f8] pr-px pt-[7px]"><Up /><Down /></div>
          </div>
          <Combo w={76} className="ml-[10px] w-[146px]">meters</Combo>
          <Svg w={24} h={18} className="ml-[10px]"><path d="M6 2L0 9L6 16" fill="#999" stroke="#777" /><path d="M6 1H17V16H6Z" fill="#fff" stroke="#777" strokeWidth="1.500" /><path d="M8 5H15M8 11H18" stroke="#777" strokeWidth="2" /><path d="M15 12H24L19.500 17Z" fill="#555" /></Svg>
        </div>
        <div className="h-[45px] leading-[46px]"><T w={108}>Segments</T></div>
        <div className={frame + "flex h-[20px] w-[776px] overflow-hidden bg-white pl-[4px]"}>
          <div className="h-[17px] overflow-hidden leading-[22px]"><T w={14}>5</T></div>
          <div className="ml-auto flex w-[17px] flex-col items-center gap-[3px] border-l border-[#b6b6b6] bg-[#f8f8f8] pr-px pt-[3px]"><Up /><Down /></div>
        </div>
        <div className="h-[45px] leading-[49px]"><T w={147}>End cap style</T></div>
        <Combo w={78} className="w-[776px]">Square</Combo>
        <div className="h-[44px] leading-[47px]"><T w={103}>Join style</T></div>
        <Combo w={56} className="w-[776px]">Miter</Combo>
        <div className="h-[45px] leading-[48px]"><T w={111}>Miter limit</T></div>
        <div className="flex h-[20px] w-[776px] items-start overflow-hidden rounded-[2px] border border-[#3daee9] bg-white pl-[4px]">
          <div className="mt-px h-[16px] overflow-hidden bg-[#0078d7] leading-[20px] text-white"><T w={106}>1,000000</T></div>
          <div className="ml-auto mr-[11px] mt-[4px]"><Clear /></div>
          <div className="flex h-full w-[17px] flex-col items-center gap-[3px] border-l border-[#b6b6b6] bg-[#f8f8f8] pr-px pt-[3px]"><Up /><Down c="#999" /></div>
        </div>
        <div className="flex h-[52px] items-center leading-[50px]"><Check on className="-mt-px" /><T w={160} className="ml-[6px] pt-[2px]">Dissolve result</T></div>
        <div className="h-[36px] leading-[31px]"><T w={94}>Buffered</T></div>
        <div className="flex">
          <div className={frame + "h-[38px] w-[726px] bg-white pl-[3px] leading-[38px] text-[#828282]"}><T w={272}>[Create temporary layer]</T></div>
          <Button w={21} className="ml-[6px] h-[38px] w-[44px]">...</Button>
        </div>
        <div className="flex h-[46px] items-center pt-[3px] leading-[44px]"><Check on className="-mt-[2px]" /><T w={445} className="ml-[6px] pt-[2px]">Open output file after running algorithm</T></div>
      </div>
      <div className="ml-auto flex pt-px"><VScroll className="w-[18px]" thumb="h-[637px]" /></div>
    </div>
  );
}

function BufferDialog() {
  return (
    <div className="absolute left-[468px] top-[96px] flex h-[911px] w-[1105px] flex-col border border-[#4f4f4f] bg-[#efefef] text-[25px] text-black shadow-[0_4px_22px_rgba(0,0,0,0.45)]">
      <div className="flex h-[37px] shrink-0 items-center bg-white pl-[9px] pr-[15px] font-['Open_Sans'] text-[15px]">
        <QLogo s={19} />
        <T w={41} className="ml-[5px] pb-[2px] leading-[34px]">Buffer</T>
        <Svg s={13} className="ml-auto"><path d="M.5 .5L12.500 12.500M12.500 .5L.5 12.500" stroke="#000" strokeWidth="1.100" /></Svg>
      </div>
      <div className="flex h-[730px] shrink-0 pl-[13px] pt-[13px]">
        <div>
          <div className="flex h-[44px] items-end">
            <div className="h-[44px] w-[155px] rounded-t-[3px] border border-b-0 border-[#adadad] bg-gradient-to-b from-white to-[#f6f6f6] pl-[14px] leading-[47px]"><T w={124}>Parameters</T></div>
            <div className="h-[42px] w-[69px] border border-l-0 border-[#adadad] bg-[#e9e9e9] pl-[14px] leading-[46px]"><T w={41}>Log</T></div>
            <div className="h-px flex-1 bg-[#adadad]" />
          </div>
          <Parameters />
        </div>
        <div className="flex w-[17px] flex-col items-center pr-[4px]">
          <Svg w={6} h={11} className="mt-px"><path d="M6 0L0 5.500L6 11Z" fill="#555" /></Svg>
          <div className="mt-[340px] h-[17px] border-l border-dotted border-[#a8a8a8]" />
        </div>
        <div className="flex h-[717px] w-[256px] overflow-hidden border border-[#adadad] bg-white">
          <div className="flex-1 overflow-hidden pl-[4px] text-[#646464]">
            <div className="mb-[7px] mt-[5px] h-[44px] text-[38px] font-bold leading-[46px] text-[#525252]"><T w={118}>Buffer</T></div>
            {helpText.map((p, i) => (
              <div key={i} className="mb-[12px]">
                {p.map(([t, w]) => <div key={t} className="h-[30px] leading-[46px]"><T w={w}>{t}</T></div>)}
              </div>
            ))}
          </div>
          <VScroll className="w-[18px]" thumb="h-[399px]" />
        </div>
      </div>
      <div className="mt-[44px] flex pl-[13px] pr-[13px]">
        <div className={frame + "flex h-[38px] w-[988px] items-center justify-center bg-white leading-[36px]"}><T w={38} className="pt-[2px]">0%</T></div>
        <div className="ml-auto flex h-[39px] w-[82px] items-center justify-center rounded-[2px] border border-[#c4c4c4] bg-gradient-to-b from-[#fafafa] to-[#efefef] leading-[35px] text-[#828282]"><T w={74} className="pt-[4px]">Cancel</T></div>
      </div>
      <div className="mt-[7px] flex gap-[7px] pl-[13px] pr-[13px]">
        <Button w={258} className="mr-auto h-[39px] w-[267px]">Run as Batch Process...</Button>
        <div className="flex h-[39px] w-[80px] items-center justify-center rounded-[2px] border border-[#3daee9] bg-gradient-to-b from-white to-[#e2e8ee] leading-[36px]"><T w={45} className="pt-[2px]">Run</T></div>
        <Button w={61} className="h-[39px] w-[80px]">Close</Button>
        <Button w={51} className="h-[39px] w-[80px]">Help</Button>
      </div>
    </div>
  );
}

export default function App() {
  return (
    <div className="relative flex h-[1026px] w-[1920px] flex-col overflow-hidden bg-[#efefef] font-['DejaVu_Sans_Condensed','DejaVu_Sans',sans-serif] text-black">
      <div className="flex h-[29px] shrink-0 items-center bg-white pl-[2px] font-['Open_Sans'] text-[15px] text-[#8f8f8f]">
        <QLogo s={20} />
        <T w={149} className="ml-[5px]">*GIS4SCHOOLS - QGIS</T>
        <div className="ml-auto flex items-center pr-[26px]">
          <Svg w={12} h={12}><path d="M0 5.500H12" stroke="#8f8f8f" /></Svg>
          <Svg w={12} h={12} className="ml-[46px]"><path d="M.5 2.500H9.500V11.500H.5ZM2.500 2.500V.5H11.500V9.500H9.500" stroke="#8f8f8f" /></Svg>
          <Svg w={12} h={12} className="ml-[47px]"><path d="M0 0L12 12M12 0L0 12" stroke="#8f8f8f" /></Svg>
        </div>
      </div>
      <div className="flex h-[35px] shrink-0 gap-[15px] border-b border-[#d2d2d2] pl-[11px] text-[25px] leading-[37px] text-[#9d9d9d]">
        {menus.map(([a, u, b, w]) => (
          <T key={a + u + b} w={w}>{a}<span className="underline decoration-2 underline-offset-2">{u}</span>{b}</T>
        ))}
      </div>
      <Toolbars />
      <div className="flex h-[672px] shrink-0">
        <div className="flex w-[370px] shrink-0 flex-col">
          <BrowserDock />
          <LayersDock />
        </div>
        <div className="mt-px flex-1 border border-[#a9b4bb] bg-[#3fb7ff]" />
      </div>
      <StatusBar />
      <BufferDialog />
    </div>
  );
}
